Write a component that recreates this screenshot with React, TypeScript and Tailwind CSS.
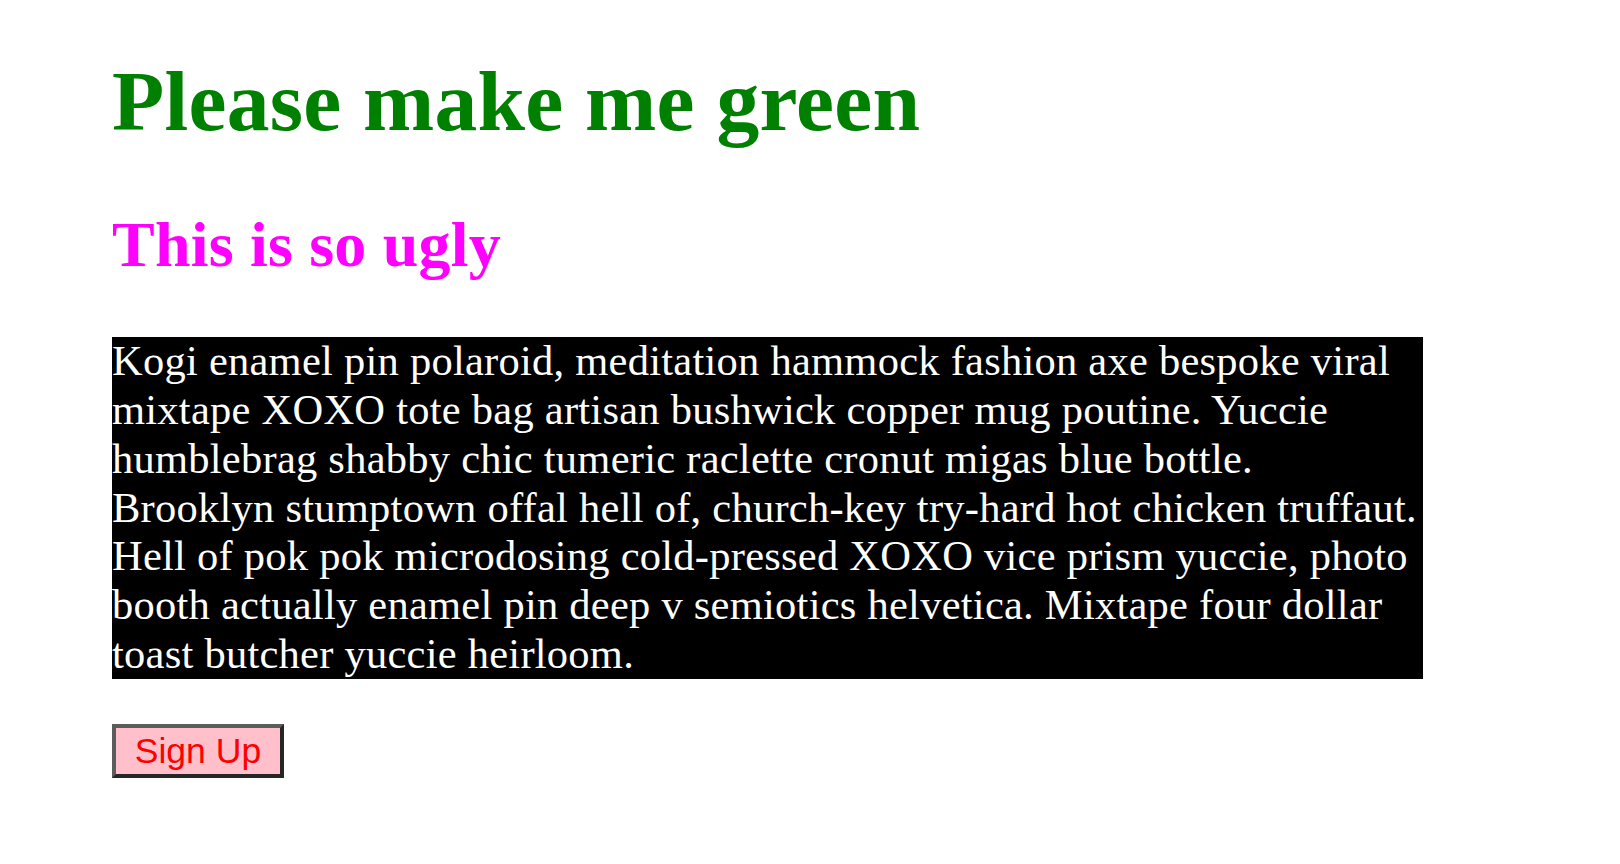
const lines = [
  'Kogi enamel pin polaroid, meditation hammock fashion axe bespoke viral',
  'mixtape XOXO tote bag artisan bushwick copper mug poutine. Yuccie',
  'humblebrag shabby chic tumeric raclette cronut migas blue bottle.',
  'Brooklyn stumptown offal hell of, church-key try-hard hot chicken truffaut.',
  'Hell of pok pok microdosing cold-pressed XOXO vice prism yuccie, photo',
  'booth actually enamel pin deep v semiotics helvetica. Mixtape four dollar',
  'toast butcher yuccie heirloom.',
]

export default function App() {
  return (
    <div className="min-h-screen bg-white pl-[112px] font-['Liberation_Serif',serif]">
      <div className="flex flex-col items-start">
        <h1 className="mt-[52px] text-[85.5px] leading-[98px] font-bold tracking-[0.25px] text-[#008000]">
          Please make me green
        </h1>
        <h2 className="mt-[58px] text-[64px] leading-[74px] font-bold tracking-[0.2px] text-[#ff00ff]">
          This is so ugly
        </h2>
        <p className="mt-[55px] w-[1311px] bg-black text-[42.5px] leading-[48.86px] tracking-[0.25px] text-white whitespace-nowrap">
          {lines.map((l, i) => (
            <span key={i} className="block">{l}</span>
          ))}
        </p>
        <button
          type="button"
          className="mt-[45px] h-[54px] w-[172px] border-[4px] border-t-[#5c5c5c] border-l-[#5c5c5c] border-r-[#262626] border-b-[#262626] bg-[#ffc0cb] text-center font-['Liberation_Sans',Arial,sans-serif] text-[35.6px] leading-[41px] text-[#ff0000]"
        >
          Sign Up
        </button>
      </div>
    </div>
  )
}
